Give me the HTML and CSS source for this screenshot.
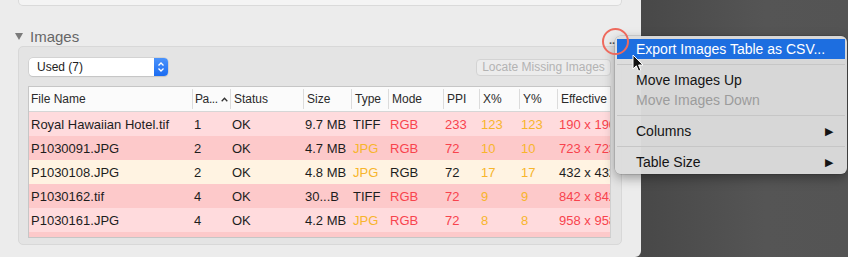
FILE: index.html
```html
<!DOCTYPE html>
<html lang="en">
<head>
    <meta charset="UTF-8">
    <title>Images</title>
    <link rel="stylesheet" href="styles.css">
</head>
<body>
    <div class="screen">
        <div class="panel">
            <div class="prev-box"></div>

            <div class="section-title">
                <span class="disclosure"></span>
                <span class="title-text">Images</span>
            </div>

            <div class="images-box">
                <div class="toolbar">
                    <div class="popup">
                        <span class="popup-label">Used (7)</span>
                        <span class="stepper">
                            <svg width="8" height="12" viewBox="0 0 8 12">
                                <path d="M1.5 4.5 L4 2 L6.5 4.5 M1.5 7.5 L4 10 L6.5 7.5" fill="none" stroke="#fff" stroke-width="1.3"/>
                            </svg>
                        </span>
                    </div>
                    <button class="locate-btn" disabled>Locate Missing Images</button>
                </div>

                <div class="table">
                    <div class="row head">
                        <div class="cell">File Name</div>
                        <div class="cell sorted"><span class="short">Pa...</span><svg class="caret" width="7" height="5" viewBox="0 0 7 5"><path d="M0.7 4.3 L3.5 1.3 L6.3 4.3" fill="none" stroke="#333" stroke-width="1.3"/></svg></div>
                        <div class="cell">Status</div>
                        <div class="cell">Size</div>
                        <div class="cell">Type</div>
                        <div class="cell">Mode</div>
                        <div class="cell">PPI</div>
                        <div class="cell">X%</div>
                        <div class="cell">Y%</div>
                        <div class="cell">Effective</div>
                    </div>
                    <div class="row pink">
                        <div class="cell">Royal Hawaiian Hotel.tif</div>
                        <div class="cell">1</div>
                        <div class="cell">OK</div>
                        <div class="cell">9.7 MB</div>
                        <div class="cell">TIFF</div>
                        <div class="cell red">RGB</div>
                        <div class="cell red">233</div>
                        <div class="cell orange">123</div>
                        <div class="cell orange">123</div>
                        <div class="cell red">190 x 190</div>
                    </div>
                    <div class="row rose">
                        <div class="cell">P1030091.JPG</div>
                        <div class="cell">2</div>
                        <div class="cell">OK</div>
                        <div class="cell">4.7 MB</div>
                        <div class="cell orange">JPG</div>
                        <div class="cell red">RGB</div>
                        <div class="cell red">72</div>
                        <div class="cell orange">10</div>
                        <div class="cell orange">10</div>
                        <div class="cell red">723 x 723</div>
                    </div>
                    <div class="row cream">
                        <div class="cell">P1030108.JPG</div>
                        <div class="cell">2</div>
                        <div class="cell">OK</div>
                        <div class="cell">4.8 MB</div>
                        <div class="cell orange">JPG</div>
                        <div class="cell">RGB</div>
                        <div class="cell">72</div>
                        <div class="cell orange">17</div>
                        <div class="cell orange">17</div>
                        <div class="cell">432 x 432</div>
                    </div>
                    <div class="row rose">
                        <div class="cell">P1030162.tif</div>
                        <div class="cell">4</div>
                        <div class="cell">OK</div>
                        <div class="cell">30...B</div>
                        <div class="cell">TIFF</div>
                        <div class="cell red">RGB</div>
                        <div class="cell red">72</div>
                        <div class="cell orange">9</div>
                        <div class="cell orange">9</div>
                        <div class="cell red">842 x 842</div>
                    </div>
                    <div class="row pink">
                        <div class="cell">P1030161.JPG</div>
                        <div class="cell">4</div>
                        <div class="cell">OK</div>
                        <div class="cell">4.2 MB</div>
                        <div class="cell orange">JPG</div>
                        <div class="cell red">RGB</div>
                        <div class="cell red">72</div>
                        <div class="cell orange">8</div>
                        <div class="cell orange">8</div>
                        <div class="cell red">958 x 958</div>
                    </div>
                    <div class="row rose"></div>
                </div>
            </div>
        </div>
        <div class="backdrop"></div>

        <span class="more-dots">..</span>
        <div class="menu">
            <div class="menu-item selected">Export Images Table as CSV...</div>
            <div class="menu-sep"></div>
            <div class="menu-item">Move Images Up</div>
            <div class="menu-item disabled">Move Images Down</div>
            <div class="menu-sep"></div>
            <div class="menu-item">Columns <span class="submenu">&#9654;</span></div>
            <div class="menu-sep"></div>
            <div class="menu-item">Table Size <span class="submenu">&#9654;</span></div>
        </div>
        <div class="highlight-ring"></div>
        <svg class="cursor" width="12" height="19" viewBox="0 0 12 19">
            <path d="M1 1 L1 15 L4.3 11.8 L6.6 17.2 L8.8 16.2 L6.6 11 L11 11 Z" fill="#111" stroke="#fff" stroke-width="1"/>
        </svg>
    </div>
</body>
</html>
```

FILE: styles.css
```css
/* General Styles */
body {
    margin: 0;
    font-family: "Liberation Sans", Arial, sans-serif;
    color: #1d1d1d;
    background-color: #4e4e4e;
}

.screen {
    position: relative;
    display: flex;
    width: 848px;
    height: 257px;
    overflow: hidden;
}

.panel {
    width: 641px;
    height: 257px;
    background-color: #ececec;
    border-bottom-right-radius: 6px;
    box-sizing: border-box;
    padding: 0 19px 0 18px;
}

.backdrop {
    flex: 1;
    background: linear-gradient(90deg, #484848, #555555 60%, #545454);
}

.prev-box {
    height: 6px;
    background-color: #f4f4f4;
    border: 1px solid #dadada;
    border-top: none;
    border-radius: 0 0 5px 5px;
    box-sizing: border-box;
}

/* Section header */
.section-title {
    display: flex;
    align-items: center;
    height: 20px;
    margin: 20px 0 0 -3px;
}

.disclosure {
    width: 0;
    height: 0;
    border-left: 4px solid transparent;
    border-right: 4px solid transparent;
    border-top: 7px solid #7b7b7b;
    margin-right: 7px;
    margin-top: 1px;
}

.title-text {
    font-size: 15px;
    color: #666;
}

.images-box {
    background-color: #e4e4e4;
    border: 1px solid #d8d8d8;
    border-radius: 5px;
    height: 199px;
    box-sizing: border-box;
    padding: 11px 9px 0 9px;
}

.toolbar {
    display: flex;
    justify-content: space-between;
    align-items: center;
    height: 18px;
    margin-bottom: 10px;
}

.popup {
    display: flex;
    align-items: center;
    justify-content: space-between;
    width: 139px;
    height: 18px;
    margin-left: 1px;
    background-color: #fff;
    border-radius: 4px;
    box-shadow: 0 0 0 0.5px #c2c2c2, 0 1px 1px rgba(0, 0, 0, 0.12);
    box-sizing: border-box;
    padding-left: 8px;
    font-size: 12px;
}

.stepper {
    display: flex;
    align-items: center;
    justify-content: center;
    width: 14px;
    height: 18px;
    background: linear-gradient(#4b93fb, #1b6cf2);
    border-radius: 0 4px 4px 0;
}

.locate-btn {
    width: 135px;
    height: 17px;
    padding: 0;
    margin-right: 1px;
    font-family: inherit;
    font-size: 12px;
    color: #b3b3b3;
    background-color: #ececec;
    border: 1px solid #d3d3d3;
    border-radius: 4px;
}

/* Table */
.table {
    width: 583px;
    height: 152px;
    background-color: #fff;
    border: 1px solid #c6c6c6;
    border-right-color: #d0d0d0;
    box-sizing: border-box;
    overflow: hidden;
}

.row {
    display: grid;
    grid-template-columns: 163px 38px 73px 48px 37px 55px 36px 40px 38px 120px;
    height: 24px;
    align-items: center;
    font-size: 13px;
    white-space: nowrap;
}

.row .cell {
    padding-left: 2px;
    overflow: hidden;
}

.row.head {
    height: 24px;
    background-color: #fbfbfb;
    border-bottom: 1px solid #d6d6d6;
    font-size: 12px;
    color: #2a2a2a;
}

.row.head .cell {
    border-left: 1px solid #dcdcdc;
    height: 20px;
    line-height: 20px;
    padding-left: 3px;
}

.row.head .cell:first-child {
    border-left: none;
    padding-left: 2px;
}

.row.head .cell.sorted {
    display: flex;
    align-items: center;
    padding-left: 2px;
}

.short {
    letter-spacing: -0.4px;
}

.caret {
    margin-left: 3px;
    flex-shrink: 0;
}

.pink { background-color: #ffdbdd; }
.rose { background-color: #fdc9ca; }
.cream { background-color: #fff3e2; }

.red { color: #f8434d; }
.orange { color: #f7b52c; }

/* Context menu */
.more-dots {
    position: absolute;
    left: 609px;
    top: 34px;
    font-size: 11px;
    font-weight: bold;
    color: #555;
}

.menu {
    position: absolute;
    left: 615px;
    top: 36px;
    width: 232px;
    padding: 3px 2px 2px 2px;
    box-sizing: border-box;
    background-color: rgba(220, 220, 220, 0.97);
    border-radius: 6px;
    box-shadow: 0 0 0 0.5px rgba(0, 0, 0, 0.2), 0 4px 12px rgba(0, 0, 0, 0.35);
    font-size: 14px;
}

.menu-item {
    display: flex;
    justify-content: space-between;
    align-items: center;
    height: 20px;
    padding: 0 12px 0 19px;
    color: #141414;
}

.menu-item.selected {
    background-color: #1d6ee0;
    color: #fff;
}

.menu-item.disabled {
    color: #9c9c9c;
}

.submenu {
    font-size: 11px;
}

.menu-sep {
    height: 1px;
    margin: 5px 0;
    background-color: #c6c6c6;
}

.highlight-ring {
    position: absolute;
    left: 602px;
    top: 28px;
    width: 23px;
    height: 23px;
    border: 2px solid #ee6a5d;
    border-radius: 50%;
}

.cursor {
    position: absolute;
    left: 632px;
    top: 54px;
}
```
